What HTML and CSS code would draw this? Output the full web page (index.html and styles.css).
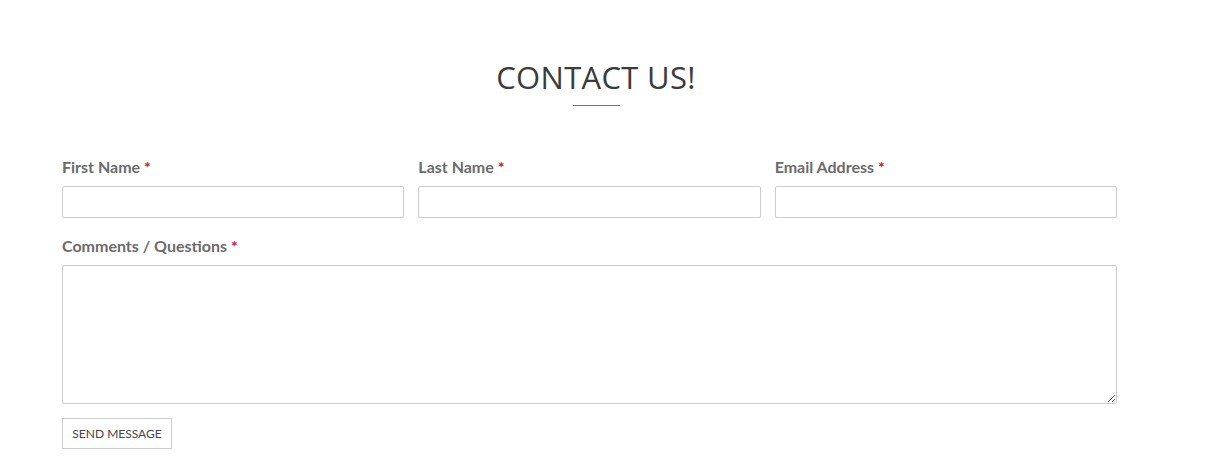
FILE: index.html
```html
<!DOCTYPE html>
<html lang="en">
<head>
    <meta charset="UTF-8">
    <title>Contact Us</title>
    <link rel="stylesheet" href="styles.css">
</head>
<body>
    <section class="contact">
        <div class="heading">
            <h1>CONTACT US!</h1>
            <span class="underline"></span>
        </div>
        <form class="contact-form">
            <div class="row">
                <div class="field">
                    <label>First Name <span class="req">*</span></label>
                    <input type="text">
                </div>
                <div class="field">
                    <label>Last Name <span class="req">*</span></label>
                    <input type="text">
                </div>
                <div class="field">
                    <label>Email Address <span class="req">*</span></label>
                    <input type="email">
                </div>
            </div>
            <div class="field">
                <label>Comments / Questions <span class="req">*</span></label>
                <textarea></textarea>
            </div>
            <button type="submit" class="btn">SEND MESSAGE</button>
        </form>
    </section>
</body>
</html>
```

FILE: styles.css
```css
body {
    margin: 0;
    background: #fff;
    font-family: Lato, "Open Sans", sans-serif;
}

.contact {
    width: 1192px;
    padding-top: 59px;
}

/* Heading */
.heading {
    text-align: center;
}

.heading h1 {
    margin: 0;
    font-family: "Open Sans", sans-serif;
    font-weight: 400;
    font-size: 31px;
    letter-spacing: 0.3px;
    line-height: 36px;
    color: #3b3b3b;
}

.underline {
    display: block;
    width: 47px;
    height: 1px;
    margin: 10px auto 0;
    background: #28a745;
}

/* Form */
.contact-form {
    margin: 51px 0 0 62px;
    width: 1055px;
}

.row {
    display: grid;
    grid-template-columns: repeat(3, 1fr);
    gap: 14px;
}

.field {
    margin-bottom: 18px;
}

.field label {
    display: block;
    font-weight: 700;
    font-size: 16px;
    line-height: 20px;
    color: #6b6b6b;
    margin-bottom: 9px;
}

.req {
    color: #c8102e;
}

.field input,
.field textarea {
    display: block;
    box-sizing: border-box;
    width: 100%;
    border: 1px solid #cccccc;
    border-radius: 2px;
    background: #fff;
    font-family: inherit;
    margin: 0;
}

.field input {
    height: 32px;
}

.field textarea {
    height: 139px;
    margin-bottom: -4px;
}

.btn {
    display: block;
    box-sizing: border-box;
    width: 110px;
    height: 31px;
    background: #fff;
    border: 1px solid #cccccc;
    border-radius: 0;
    font-family: Lato, sans-serif;
    font-size: 12px;
    color: #444;
    cursor: pointer;
}
```
